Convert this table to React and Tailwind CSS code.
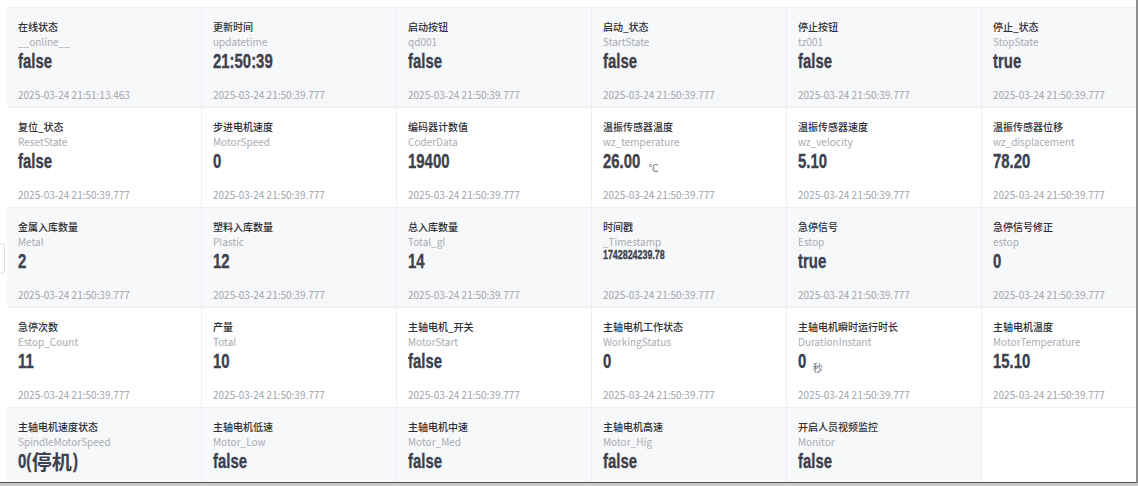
import React from "react";

const TS = "2025-03-24 21:50:39.777";

function Sc({ children, className = "" }) {
  return (
    <span
      className={`inline-block origin-left scale-x-[0.71] font-bold text-[#3d404d] [-webkit-text-stroke:0.35px_#3d404d] font-['Liberation_Sans','Noto_Sans_CJK_SC',sans-serif] ${className}`}
    >
      {children}
    </span>
  );
}

const stopped = (
  <>
    <Sc className="text-[21px] leading-[25px] mr-[-5px]">0(</Sc>
    <span className="font-bold text-[#3d404d] text-[20px] leading-[25px] font-['Noto_Sans_CJK_SC',sans-serif] mt-[1px]">停机</span>
    <Sc className="text-[21px] leading-[25px] ml-[1px]">)</Sc>
  </>
);

const rows = [
  [
    { t: "在线状态", s: "__online__", v: "false", ts: "2025-03-24 21:51:13.463" },
    { t: "更新时间", s: "updatetime", v: "21:50:39" },
    { t: "启动按钮", s: "qd001", v: "false" },
    { t: "启动_状态", s: "StartState", v: "false" },
    { t: "停止按钮", s: "tz001", v: "false" },
    { t: "停止_状态", s: "StopState", v: "true" },
  ],
  [
    { t: "复位_状态", s: "ResetState", v: "false" },
    { t: "步进电机速度", s: "MotorSpeed", v: "0" },
    { t: "编码器计数值", s: "CoderData", v: "19400" },
    { t: "温振传感器温度", s: "wz_temperature", v: "26.00", u: "℃", uc: "ml-[-7px]" },
    { t: "温振传感器速度", s: "wz_velocity", v: "5.10" },
    { t: "温振传感器位移", s: "wz_displacement", v: "78.20" },
  ],
  [
    { t: "金属入库数量", s: "Metal", v: "2" },
    { t: "塑料入库数量", s: "Plastic", v: "12" },
    { t: "总入库数量", s: "Total_gl", v: "14" },
    { t: "时间戳", s: "_Timestamp", v: "1742824239.78", small: true },
    { t: "急停信号", s: "Estop", v: "true" },
    { t: "急停信号修正", s: "estop", v: "0" },
  ],
  [
    { t: "急停次数", s: "Estop_Count", v: "11" },
    { t: "产量", s: "Total", v: "10" },
    { t: "主轴电机_开关", s: "MotorStart", v: "false" },
    { t: "主轴电机工作状态", s: "WorkingStatus", v: "0" },
    { t: "主轴电机瞬时运行时长", s: "DurationInstant", v: "0", u: "秒", uc: "ml-[3px]" },
    { t: "主轴电机温度", s: "MotorTemperature", v: "15.10" },
  ],
  [
    { t: "主轴电机速度状态", s: "SpindleMotorSpeed", custom: stopped },
    { t: "主轴电机低速", s: "Motor_Low", v: "false" },
    { t: "主轴电机中速", s: "Motor_Med", v: "false" },
    { t: "主轴电机高速", s: "Motor_Hig", v: "false" },
    { t: "开启人员视频监控", s: "Monitor", v: "false" },
  ],
];

function Cell({ d, gray }) {
  return (
    <div
      className={`flex flex-col h-[100px] pt-[12px] px-[11px] pb-[5px] border-r border-b border-[#eceff5] ${
        gray ? "bg-[#f7f8fa]" : "bg-white"
      }`}
    >
      <div className="text-[10px] leading-[14px] font-medium text-[#2c2e33] whitespace-nowrap">{d.t}</div>
      <div className="text-[10px] leading-[15px] text-[#a8abb2] whitespace-nowrap">{d.s}</div>
      <div className="h-[25px] mt-[-1px] flex items-start whitespace-nowrap">
        {d.custom ? (
          d.custom
        ) : d.small ? (
          <Sc className="text-[12.5px] leading-[14px]">{d.v}</Sc>
        ) : (
          <Sc className="text-[21px] leading-[25px]">{d.v}</Sc>
        )}
        {d.u && (
          <span className={`text-[10px] leading-[12px] text-[#6b6f7a] self-end mb-[-1px] ${d.uc}`}>{d.u}</span>
        )}
      </div>
      <div className="mt-auto text-[10px] leading-[14px] text-[#a0a3ab] whitespace-nowrap">{d.ts || TS}</div>
    </div>
  );
}

export default function App() {
  return (
    <div className="relative w-[1138px] h-[486px] bg-white overflow-hidden font-['Noto_Sans_CJK_SC',sans-serif]">
      <div className="w-[1138px] h-[483px] border-r-[2px] border-[#8f8f8f] border-b border-b-[#4d4d4d]">
        <div className="pl-[7px] pt-[7px] h-full overflow-hidden">
          <div className="grid grid-cols-[repeat(6,195px)] border-t border-[#eceff5] w-[1170px]">
            {rows.map((r, ri) =>
              r.map((d, ci) => <Cell key={ri + "-" + ci} d={d} gray={ri % 2 === 0} />)
            )}
          </div>
        </div>
      </div>
      <div className="h-[3px] bg-[#c9c9c9]" />
      <div className="absolute left-[-6px] top-[243px] w-[11px] h-[31px] border border-[#dcdfe6] rounded-[3px] bg-white flex items-center justify-end pr-[5px] text-[7px] text-[#909399]">
        ‹
      </div>
    </div>
  );
}
